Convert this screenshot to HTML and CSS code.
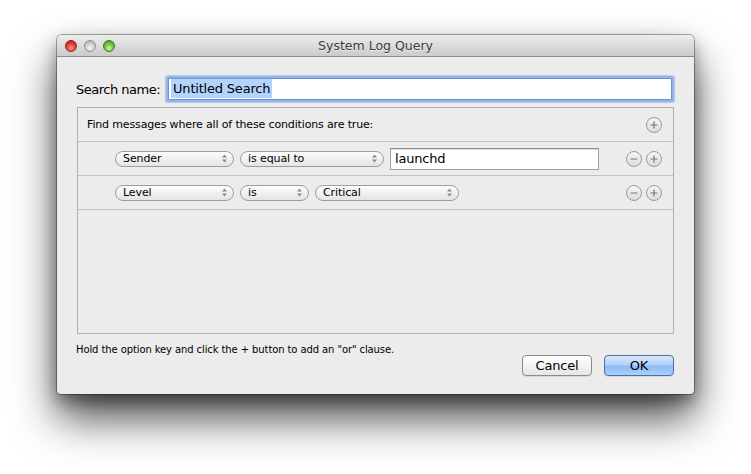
FILE: index.html
```html
<!DOCTYPE html>
<html>
<head>
<meta charset="utf-8">
<link rel="stylesheet" href="styles.css">
</head>
<body>
<div class="window">
  <div class="titlebar">
    <div class="lights">
      <span class="light red"></span>
      <span class="light grey"></span>
      <span class="light green"></span>
    </div>
    <div class="title">System Log Query</div>
  </div>
  <div class="content">
    <div class="name-row">
      <label class="name-label">Search name:</label>
      <div class="name-field"><span class="sel">Untitled Search</span></div>
    </div>
    <div class="rules">
      <div class="rule head">
        <span class="head-text">Find messages where all of these conditions are true:</span>
        <div class="btns">
          <span class="circ"><svg viewBox="0 0 16 16" width="16" height="16"><path d="M4 8h8M8 4v8" stroke="#777" stroke-width="1.4"/></svg></span>
        </div>
      </div>
      <div class="rule">
        <div class="crit">
          <span class="popup w119">Sender<i class="arr"><svg viewBox="0 0 5 9" width="5" height="9"><path d="M0 3.5L2.5 0.5 5 3.5zM0 5.5L2.5 8.5 5 5.5z" fill="#8a8a8a"/></svg></i></span>
          <span class="popup w144">is equal to<i class="arr"><svg viewBox="0 0 5 9" width="5" height="9"><path d="M0 3.5L2.5 0.5 5 3.5zM0 5.5L2.5 8.5 5 5.5z" fill="#8a8a8a"/></svg></i></span>
          <span class="tfield">launchd</span>
        </div>
        <div class="btns">
          <span class="circ"><svg viewBox="0 0 16 16" width="16" height="16"><path d="M4 8h8" stroke="#777" stroke-width="1.4"/></svg></span>
          <span class="circ"><svg viewBox="0 0 16 16" width="16" height="16"><path d="M4 8h8M8 4v8" stroke="#777" stroke-width="1.4"/></svg></span>
        </div>
      </div>
      <div class="rule">
        <div class="crit">
          <span class="popup w119">Level<i class="arr"><svg viewBox="0 0 5 9" width="5" height="9"><path d="M0 3.5L2.5 0.5 5 3.5zM0 5.5L2.5 8.5 5 5.5z" fill="#8a8a8a"/></svg></i></span>
          <span class="popup w69">is<i class="arr"><svg viewBox="0 0 5 9" width="5" height="9"><path d="M0 3.5L2.5 0.5 5 3.5zM0 5.5L2.5 8.5 5 5.5z" fill="#8a8a8a"/></svg></i></span>
          <span class="popup w144">Critical<i class="arr"><svg viewBox="0 0 5 9" width="5" height="9"><path d="M0 3.5L2.5 0.5 5 3.5zM0 5.5L2.5 8.5 5 5.5z" fill="#8a8a8a"/></svg></i></span>
        </div>
        <div class="btns">
          <span class="circ"><svg viewBox="0 0 16 16" width="16" height="16"><path d="M4 8h8" stroke="#777" stroke-width="1.4"/></svg></span>
          <span class="circ"><svg viewBox="0 0 16 16" width="16" height="16"><path d="M4 8h8M8 4v8" stroke="#777" stroke-width="1.4"/></svg></span>
        </div>
      </div>
      <div class="empty"></div>
    </div>
    <div class="footer">
      <div class="hint">Hold the option key and click the + button to add an "or" clause.</div>
      <div class="actions">
        <button class="btn">Cancel</button>
        <button class="btn default">OK</button>
      </div>
    </div>
  </div>
</div>
</body>
</html>
```
FILE: styles.css
```css
html, body {
  margin: 0;
  padding: 0;
  background: #ffffff;
}
html {
  height: 100%;
}
body {
  min-height: 474px;
  box-sizing: border-box;
  padding: 35px 0 0 57px;
  font-family: "DejaVu Sans", "Liberation Sans", sans-serif;
  color: #000;
  overflow: hidden;
}
.window {
  width: 637px;
  height: 359px;
  box-sizing: border-box;
  border-radius: 5px 5px 4px 4px;
  background: #ececec;
  box-shadow: 0 0 0 1px rgba(0,0,0,0.32), 0 24px 44px rgba(0,0,0,0.7), 0 8px 16px rgba(0,0,0,0.35);
  display: flex;
  flex-direction: column;
  overflow: hidden;
}
.titlebar {
  height: 21px;
  flex: none;
  background: linear-gradient(#ededed, #d8d8d8 60%, #cbcbcb);
  border-bottom: 1px solid #8e8e8e;
  display: flex;
  align-items: center;
  position: relative;
}
.lights {
  display: flex;
  gap: 7px;
  padding-left: 8px;
}
.light {
  width: 12px;
  height: 12px;
  border-radius: 50%;
  box-sizing: border-box;
}
.red {
  background: radial-gradient(circle at 50% 70%, #ff9a8d 0, #e2463c 45%, #a81611 100%);
  border: 1px solid #93231c;
}
.grey {
  background: radial-gradient(circle at 50% 70%, #f4f4f4 0, #cfcfcf 50%, #a6a6a6 100%);
  border: 1px solid #8c8c8c;
}
.green {
  background: radial-gradient(circle at 50% 70%, #d3f7a0 0, #76c843 45%, #3b8e16 100%);
  border: 1px solid #3f7a1e;
}
.title {
  position: absolute;
  left: 0;
  right: 0;
  top: 0;
  height: 21px;
  line-height: 22px;
  text-align: center;
  font-size: 12.5px;
  color: #3c3c3c;
  text-shadow: 0 1px 0 rgba(255,255,255,0.6);
}
.content {
  flex: 1;
  padding: 21px 20px 0 19px;
  display: flex;
  flex-direction: column;
}
.name-row {
  display: flex;
  align-items: center;
  gap: 8px;
}
.name-label {
  font-size: 13px;
  letter-spacing: -0.5px;
}
.name-field {
  flex: 1;
  height: 22px;
  box-sizing: border-box;
  border: 1px solid #6e94cf;
  border-radius: 1px;
  background: #fff;
  box-shadow: 0 0 0 2px #8fb5ea, 0 0 1px 3px rgba(120,160,220,0.45);
  font-size: 13px;
  line-height: 20px;
  padding-left: 2px;
  letter-spacing: -0.2px;
  margin-right: 2px;
}
.sel {
  background: #b4d3fc;
  padding: 2px 2px;
}
.rules {
  margin-top: 7px;
  margin-left: 1px;
  height: 227px;
  box-sizing: border-box;
  border: 1px solid #b0b0b0;
  display: flex;
  flex-direction: column;
}
.rule {
  height: 34px;
  flex: none;
  box-sizing: border-box;
  border-bottom: 1px solid #c2c2c2;
  display: flex;
  align-items: center;
  justify-content: space-between;
  padding-right: 11px;
}
.head {
  padding-left: 9px;
}
.head-text {
  font-size: 11px;
  letter-spacing: -0.15px;
}
.crit {
  display: flex;
  align-items: center;
  gap: 6px;
  padding-left: 37px;
}
.btns {
  display: flex;
  gap: 4px;
}
.circ {
  width: 16px;
  height: 16px;
  display: block;
}
.circ svg {
  display: block;
  border-radius: 50%;
  box-sizing: border-box;
  border: 1px solid #9a9a9a;
  background: linear-gradient(#f6f6f6, #dcdcdc);
}
.popup {
  height: 16px;
  box-sizing: border-box;
  border: 1px solid #9d9d9d;
  border-radius: 8px;
  background: linear-gradient(#fdfdfd, #eeeeee 60%, #e4e4e4);
  font-size: 11px;
  line-height: 14px;
  padding-left: 7px;
  position: relative;
  display: block;
  letter-spacing: -0.1px;
}
.arr {
  position: absolute;
  right: 6px;
  top: 2px;
  line-height: 0;
}
.w119 { width: 119px; }
.w144 { width: 144px; }
.w69 { width: 69px; }
.tfield {
  width: 209px;
  height: 22px;
  box-sizing: border-box;
  border: 1px solid #a2a2a2;
  border-top-color: #8c8c8c;
  background: #fff;
  box-shadow: inset 0 1px 1px rgba(0,0,0,0.12);
  font-size: 13px;
  line-height: 20px;
  padding-left: 4px;
  display: block;
  letter-spacing: -0.2px;
}
.empty {
  flex: 1;
}
.footer {
  display: flex;
  justify-content: space-between;
  align-items: flex-start;
  margin-top: 10px;
}
.hint {
  font-size: 10px;
  letter-spacing: -0.1px;
}
.actions {
  display: flex;
  gap: 12px;
  margin-top: 11px;
}
.btn {
  width: 70px;
  height: 21px;
  box-sizing: border-box;
  border: 1px solid #8b8b8b;
  border-radius: 4px;
  background: linear-gradient(#ffffff, #f3f3f3 50%, #e6e6e6);
  font-family: "DejaVu Sans", sans-serif;
  font-size: 13px;
  color: #000;
  padding: 0;
  letter-spacing: -0.2px;
  box-shadow: 0 1px 0 rgba(0,0,0,0.08);
}
.btn.default {
  border-color: #4f6ea8;
  background: linear-gradient(#d7e8fd, #b2d1fa 45%, #8dbcf5 55%, #a9d0fb);
}
```
